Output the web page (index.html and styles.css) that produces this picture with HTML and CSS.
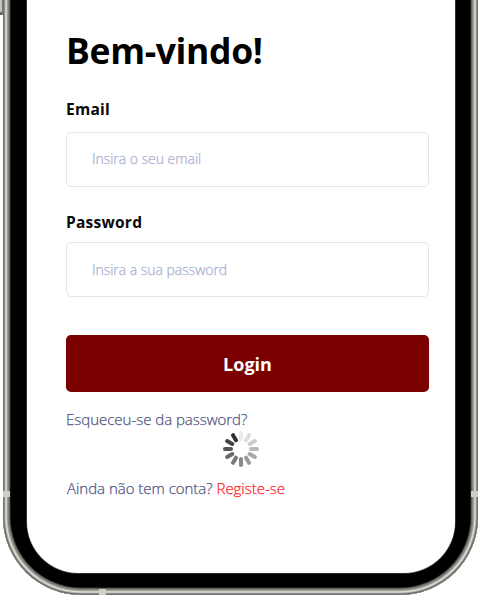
FILE: index.html
```html
<!DOCTYPE html>
<html lang="pt">
<head>
<meta charset="utf-8">
<title>Login</title>
<link rel="stylesheet" href="styles.css">
</head>
<body>
<div class="phone">
  <span class="side-button"></span>
  <span class="antenna antenna-left"></span>
  <span class="antenna antenna-right"></span>
  <span class="antenna antenna-bottom"></span>
  <main class="screen">
    <h1 class="title"><span>Bem-vindo!</span></h1>
    <form class="form">
      <label class="label" for="email">Email</label>
      <input class="input" id="email" type="email" placeholder="Insira o seu email">
      <label class="label label-password" for="password">Password</label>
      <input class="input input-password" id="password" type="password" placeholder="Insira a sua password">
      <button class="login" type="button">Login</button>
    </form>
    <a class="forgot">Esqueceu-se da password?</a>
    <svg class="spinner" viewBox="-18 -18 36 36" stroke-width="4" stroke-linecap="round">
      <path d="M0-10V-16" stroke="#ebebeb"/>
      <path d="M0-10V-16" stroke="#dedede" transform="rotate(30)"/>
      <path d="M0-10V-16" stroke="#cecece" transform="rotate(60)"/>
      <path d="M0-10V-16" stroke="#b9b9b9" transform="rotate(90)"/>
      <path d="M0-10V-16" stroke="#a9a9a9" transform="rotate(120)"/>
      <path d="M0-10V-16" stroke="#999" transform="rotate(150)"/>
      <path d="M0-10V-16" stroke="#898989" transform="rotate(180)"/>
      <path d="M0-10V-16" stroke="#797979" transform="rotate(210)"/>
      <path d="M0-10V-16" stroke="#686868" transform="rotate(240)"/>
      <path d="M0-10V-16" stroke="#555" transform="rotate(270)"/>
      <path d="M0-10V-16" stroke="#444" transform="rotate(300)"/>
      <path d="M0-10V-16" stroke="#303030" transform="rotate(330)"/>
    </svg>
    <p class="signup"><span class="question">Ainda não tem conta?</span> <a class="register">Registe-se</a></p>
  </main>
</div>
</body>
</html>
```
FILE: styles.css
```css
* { box-sizing: border-box; }
body {
  margin: 0;
  height: 596px;
  overflow: hidden;
  background: #fff;
  font-family: "Open Sans", "Noto Sans", sans-serif;
}
.phone {
  position: relative;
  width: 475px;
  height: 595px;
  margin-left: 3px;
  padding: 0 23px 22px 23.5px;
  border-radius: 0 0 78px 78px;
  background: #000;
}
.phone::before {
  content: "";
  position: absolute;
  inset: -100px 0 0;
  border-radius: 78px;
  box-shadow:
    inset 0 0 0 1.5px #6f6f6b,
    inset 0 0 0 2.5px #b5b5af,
    inset 0 0 0 3.7px #deded8,
    inset 0 0 0 4.7px #aaaaa4,
    inset 0 0 0 6px #858580,
    inset 0 0 0 7px #61615d,
    inset 0 0 0 7.7px #252523;
}
.screen {
  display: flex;
  flex-direction: column;
  align-items: flex-start;
  position: relative;
  height: 573px;
  padding: 23px 26px 0 39.5px;
  border-radius: 0 0 51px 51px;
  background: #fff;
  box-shadow: 0 0 0 .6px #555;
}
.side-button {
  position: absolute;
  left: -3px;
  top: 0;
  width: 3px;
  height: 15px;
  border-right: 1px solid #777;
  border-bottom: 3px solid #666;
  background: #c5c5c0;
}
.antenna { position: absolute; background: #cfcfc9; }
.antenna-left { left: 0; top: 491px; width: 7px; height: 6px; }
.antenna-right { right: 0; top: 491px; width: 7px; height: 6px; }
.antenna-bottom { left: 96px; bottom: 0; width: 7px; height: 6px; }
.title {
  margin: 0;
  height: 55px;
  font-size: 35.5px;
  line-height: 54px;
  font-weight: 700;
  letter-spacing: -.35px;
  color: #000;
  white-space: nowrap;
}
.form { display: flex; flex-direction: column; width: 363px; }
.label {
  margin-top: 20px;
  height: 22px;
  font-size: 15.5px;
  line-height: 22px;
  font-weight: 700;
  letter-spacing: .25px;
  color: #090909;
}
.input {
  width: 363px;
  height: 55px;
  margin: 12px 0 0;
  padding: 0 25px 2px;
  border: 1px solid #e3e5f0;
  border-radius: 5px;
  background: #fff;
  font: 300 14px "Open Sans", sans-serif;
  letter-spacing: -.03px;
}
.input::placeholder {
  color: #a9afd4;
  opacity: 1;
  -webkit-text-stroke: .25px #a9afd4;
}
.label-password { margin-top: 24px; }
.input-password { margin-top: 9px; padding-bottom: 0; }
.login {
  height: 57px;
  margin-top: 38px;
  padding: 0;
  border: 0;
  border-radius: 5px;
  background: #7b0000;
  color: #fff;
  font: 700 18px "Open Sans", sans-serif;
}
.forgot, .signup {
  height: 22px;
  margin: 16px 0 0;
  font-size: 15px;
  line-height: 22px;
  font-weight: 300;
  letter-spacing: -.02px;
  color: #50557f;
  -webkit-text-stroke: .25px;
  white-space: nowrap;
}
.spinner { width: 36px; height: 36px; margin: 1px 0 0 157px; }
.signup { margin: 10px 0 0 1px; }
.register { color: #ff2227; }
```
